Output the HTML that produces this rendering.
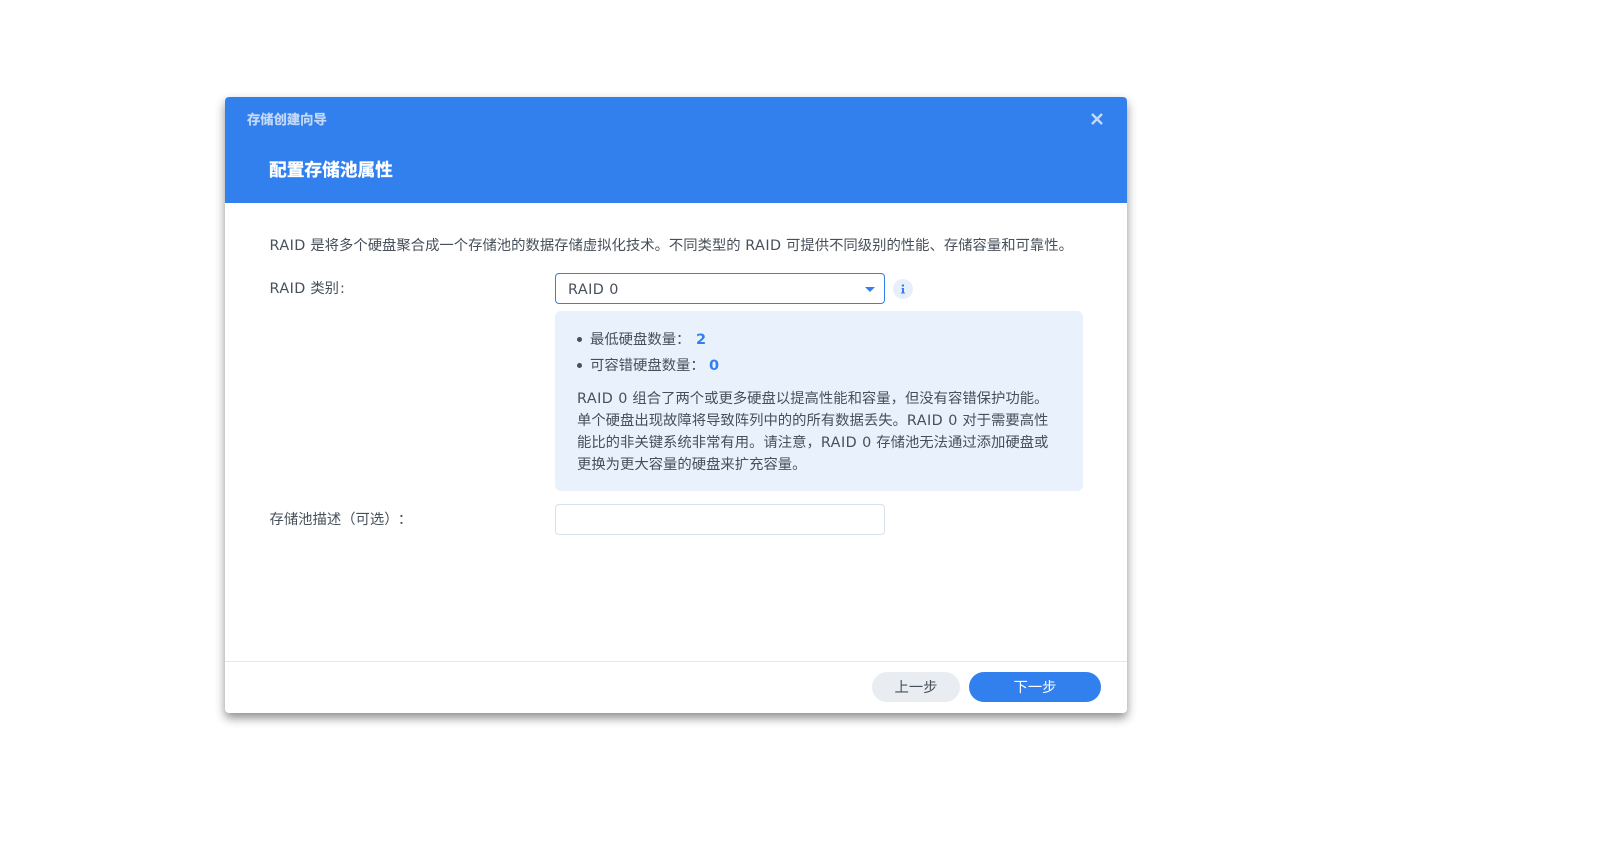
<!DOCTYPE html>
<html lang="zh"><head><meta charset="utf-8"><style>
html,body{margin:0;padding:0;width:1618px;height:851px;background:#fff;overflow:hidden}
body{font-family:"DejaVu Sans","Noto Sans CJK SC",sans-serif;color:#47505a;font-size:14.35px}
.a{position:absolute;white-space:nowrap;line-height:22px}
.a i{font-style:normal;letter-spacing:.45px}
#d{position:absolute;left:225px;top:97px;width:902px;height:616px;background:#fff;border-radius:4px;box-shadow:0 5px 10px rgba(0,0,0,.45)}
#h{position:absolute;left:225px;top:97px;width:902px;height:106px;background:#3180ee;border-radius:4px 4px 0 0}
.dot{position:absolute;left:577px;width:5px;height:5px;border-radius:50%;background:#47505a}
</style></head><body>
<div id="d"></div><div id="h"></div>
<div class="a" style="left:247px;top:108px;font-size:13.3px;font-weight:700;color:#c4d9f9;font-family:'Noto Sans CJK SC',sans-serif;-webkit-text-stroke:.25px #c4d9f9">存储创建向导</div>
<div class="a" style="left:269px;top:158px;font-size:17.7px;font-weight:700;color:#fff;font-family:'Noto Sans CJK SC',sans-serif;-webkit-text-stroke:.3px #fff">配置存储池属性</div>
<svg style="position:absolute;left:1090px;top:113px" width="14" height="12"><path d="M2 1l10 10M12 1L2 11" stroke="#c4d9f9" stroke-width="2.4" fill="none"/></svg>
<div class="a" style="left:269.5px;top:235px"><i>RAID</i> 是将多个硬盘聚合成一个存储池的数据存储虚拟化技术。不同类型的 <i>RAID</i> 可提供不同级别的性能、存储容量和可靠性。</div>
<div class="a" style="left:269.5px;top:278px"><i>RAID</i> 类别<span style="margin-left:1px">:</span></div>
<div style="position:absolute;left:555px;top:273px;width:328px;height:29px;border:1px solid #3180ee;border-radius:4px;background:#fff"></div>
<div class="a" style="left:568px;top:279px"><i>RAID 0</i></div>
<svg style="position:absolute;left:865px;top:287px" width="10" height="5"><path d="M0 0h10L5 5z" fill="#3180ee"/></svg>
<svg style="position:absolute;left:893px;top:279px" width="20" height="20"><circle cx="10" cy="10" r="10" fill="#e7effb"/><path d="M8.500 9h2.500v4.500h1v1h-4v-1h1v-3.500h-.5zM8.800 5.500h2.200v2h-2.200z" fill="#3180ee"/></svg>
<div style="position:absolute;left:555px;top:311px;width:528px;height:180px;background:#e9f1fc;border-radius:6px"></div>
<div class="dot" style="top:337px"></div>
<div class="a" style="left:590px;top:329px">最低硬盘数量&#xFF1A;</div>
<div class="a" style="left:696px;top:329px;font-weight:700;color:#3180ee;font-size:14.5px">2</div>
<div class="dot" style="top:363px"></div>
<div class="a" style="left:590px;top:355px">可容错硬盘数量&#xFF1A;</div>
<div class="a" style="left:709px;top:355px;font-weight:700;color:#3180ee;font-size:14.5px">0</div>
<div class="a" style="left:577px;top:388px"><i>RAID 0</i> 组合了两个或更多硬盘以提高性能和容量&#xFF0C;但没有容错保护功能。</div>
<div class="a" style="left:577px;top:410px">单个硬盘出现故障将导致阵列中的的所有数据丢失。<i>RAID 0</i> 对于需要高性</div>
<div class="a" style="left:577px;top:432px">能比的非关键系统非常有用。请注意&#xFF0C;<i>RAID 0</i> 存储池无法通过添加硬盘或</div>
<div class="a" style="left:577px;top:454px">更换为更大容量的硬盘来扩充容量。</div>
<div class="a" style="left:269.5px;top:509px">存储池描述&#xFF08;可选&#xFF09;<span style="margin-left:6.500px">&#xFF1A;</span></div>
<div style="position:absolute;left:555px;top:504px;width:328px;height:29px;border:1px solid #d9e1ec;border-radius:4px;background:#fff"></div>
<div style="position:absolute;left:225px;top:661px;width:902px;height:1px;background:#e3e8ee"></div>
<div class="a" style="left:872px;top:672px;width:88px;height:30px;line-height:32px;text-align:center;background:#e9edf1;border-radius:15px;color:#47505a">上一步</div>
<div class="a" style="left:969px;top:672px;width:132px;height:30px;line-height:32px;text-align:center;background:#3180ee;border-radius:15px;color:#fff">下一步</div>
</body></html>
